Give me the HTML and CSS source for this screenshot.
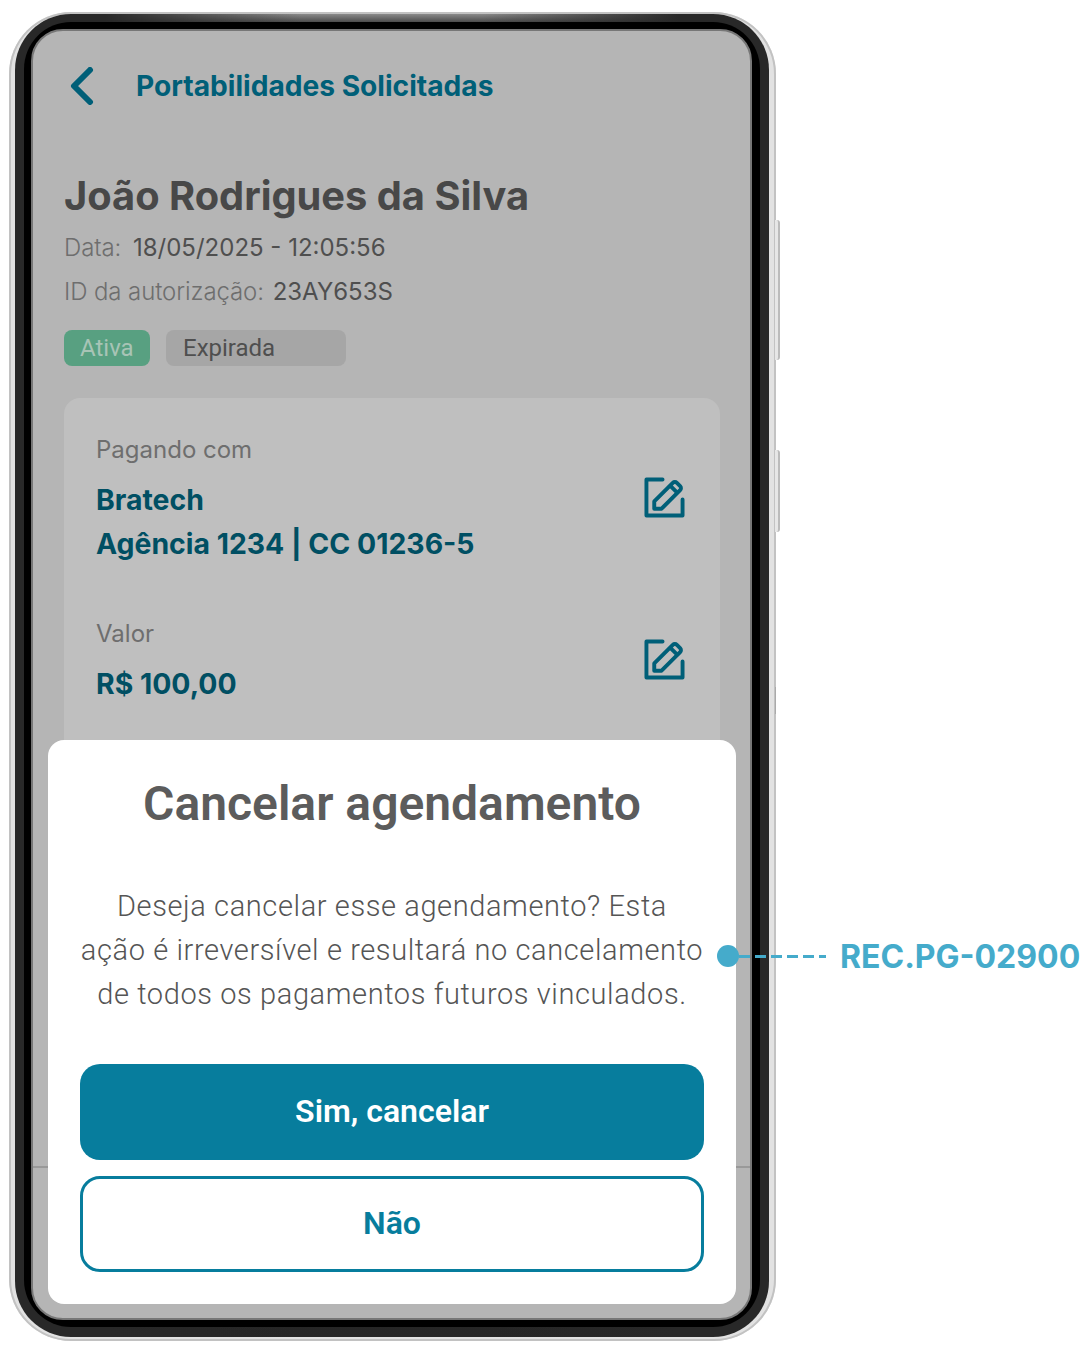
FILE: index.html
```html
<!DOCTYPE html>
<html lang="pt-BR">
<head>
    <meta charset="UTF-8">
    <meta name="viewport" content="width=device-width, initial-scale=1.0">
    <title>Portabilidades Solicitadas</title>
    <link rel="stylesheet" href="styles.css">
</head>
<body>
    <div class="stage">
        <div class="phone">
            <span class="side-key side-key-power"></span>
            <span class="side-key side-key-volume"></span>
            <span class="side-mark"></span>
            <div class="phone-bezel">
                <div class="phone-black">
                    <div class="screen">
                        <div class="screen-main">
                            <div class="app-header">
                                <svg class="back-icon" viewBox="0 0 24 38" aria-hidden="true">
                                    <path d="M20 3 4 19l16 16"/>
                                </svg>
                                <h1 class="app-title">Portabilidades Solicitadas</h1>
                            </div>

                            <h2 class="person-name">João Rodrigues da Silva</h2>
                            <p class="meta-line"><span class="meta-label">Data:</span> 18/05/2025 - 12:05:56</p>
                            <p class="meta-line"><span class="meta-label">ID da autorização:</span> 23AY653S</p>

                            <div class="chip-row">
                                <span class="chip chip-active">Ativa</span>
                                <span class="chip chip-expired">Expirada</span>
                            </div>

                            <div class="detail-card">
                                <div class="detail-row">
                                    <div class="detail-text">
                                        <p class="detail-label">Pagando com</p>
                                        <p class="detail-value">Bratech</p>
                                        <p class="detail-value">Agência 1234 | CC 01236-5</p>
                                    </div>
                                    <svg class="edit-icon" viewBox="0 0 42 42" aria-hidden="true">
                                        <path d="M19 2.500H2.500v37h37V23"/>
                                        <path d="M10.500 32.500v-7.500L29.500 6a3 3 0 0 1 4.200 0l3.300 3.300a3 3 0 0 1 0 4.200L18 32.500z"/>
                                        <path d="m27 9 6.500 6.500"/>
                                    </svg>
                                </div>
                                <div class="detail-row detail-row-amount">
                                    <div class="detail-text">
                                        <p class="detail-label">Valor</p>
                                        <p class="detail-value">R$ 100,00</p>
                                    </div>
                                    <svg class="edit-icon" viewBox="0 0 42 42" aria-hidden="true">
                                        <path d="M19 2.500H2.500v37h37V23"/>
                                        <path d="M10.500 32.500v-7.500L29.500 6a3 3 0 0 1 4.200 0l3.300 3.300a3 3 0 0 1 0 4.200L18 32.500z"/>
                                        <path d="m27 9 6.500 6.500"/>
                                    </svg>
                                </div>
                            </div>
                        </div>
                        <div class="screen-footer"></div>

                        <div class="modal">
                            <h2 class="modal-title">Cancelar agendamento</h2>
                            <p class="modal-text">Deseja cancelar esse agendamento? Esta<br>ação é irreversível e resultará no cancelamento<br>de todos os pagamentos futuros vinculados.</p>
                            <button class="btn btn-primary">Sim, cancelar</button>
                            <button class="btn btn-secondary">Não</button>
                        </div>
                    </div>
                </div>
            </div>
        </div>

        <div class="callout">
            <span class="callout-dot"></span>
            <span class="callout-line"></span>
            <span class="callout-code">REC.PG-02900</span>
        </div>
    </div>
</body>
</html>
```

FILE: styles.css
```css
* {
    margin: 0;
    padding: 0;
    box-sizing: border-box;
}

body {
    background: #fff;
    font-family: 'Roboto', sans-serif;
    overflow: hidden;
}

.stage {
    position: relative;
    width: 1082px;
    height: 1360px;
    padding: 12px 0 0 9px;
}

/* Phone frame */
.phone {
    position: relative;
    width: 767px;
    height: 1329px;
    padding: 2px 7px 4px 6px;
    border-radius: 62px;
    background: #e2e2e2;
    box-shadow: inset 0 0 0 2px #c2c2c2;
}

.side-key {
    position: absolute;
    left: 766px;
    width: 5px;
    background: #e6e6e6;
    border-radius: 0 3px 3px 0;
    border-right: 2px solid #bbb;
}

.side-key-power {
    top: 208px;
    height: 140px;
}

.side-key-volume {
    top: 438px;
    height: 82px;
}

.side-mark {
    position: absolute;
    left: 766px;
    top: 675px;
    width: 1px;
    height: 27px;
    background: #aaa;
}

.phone-bezel {
    height: 100%;
    padding: 8px 9px 10px 9px;
    border-radius: 56px;
    background:
        linear-gradient(90deg, #282828 12%, rgba(40, 40, 40, 0) 38%, rgba(40, 40, 40, 0) 62%, #282828 88%),
        linear-gradient(180deg, #8a8a8a 0, #3c3c3c 10px, #383838 50%, #262626 100%);
}

.phone-black {
    height: 100%;
    padding: 7px 8px 7px 7px;
    border-radius: 47px;
    background: #000;
}

.screen {
    position: relative;
    display: flex;
    flex-direction: column;
    height: 100%;
    overflow: hidden;
    border: 2px solid #777;
    border-radius: 32px;
    background: #b5b5b5;
}

.screen-main {
    flex: 1;
    overflow: hidden;
    padding: 0 30px 0 31px;
}

.screen-footer {
    height: 152px;
    border-top: 2px solid #999;
}

/* Header */
.app-header {
    display: flex;
    align-items: center;
    height: 110px;
}

.back-icon {
    width: 24px;
    height: 38px;
    margin-left: 6px;
    fill: none;
    stroke: #005f78;
    stroke-width: 6;
    stroke-linecap: round;
    stroke-linejoin: round;
}

.app-title {
    margin-left: 42px;
    color: #005f78;
    font-family: 'Inter', sans-serif;
    font-size: 28.15px;
    font-weight: 700;
    white-space: nowrap;
}

.person-name {
    margin-top: 31px;
    color: #484848;
    font-family: 'Inter', sans-serif;
    font-size: 39.8px;
    font-weight: 700;
    line-height: 48px;
}

.meta-line {
    height: 44px;
    color: #4f4f4f;
    font-family: 'Inter', sans-serif;
    font-size: 24px;
    font-weight: 400;
    line-height: 44px;
}

.person-name + .meta-line {
    margin-top: 6px;
}

.meta-label {
    margin-right: 2px;
    color: #6e6e6e;
    font-weight: 300;
    letter-spacing: -0.1px;
}

.person-name + .meta-line .meta-label {
    margin-right: 5px;
}

.chip-row {
    display: flex;
    gap: 16px;
    margin-top: 16px;
}

.chip {
    height: 36px;
    border-radius: 8px;
    font-size: 24px;
    line-height: 36px;
}

.chip-active {
    width: 86px;
    padding-left: 16px;
    background: #58a081;
    color: #a8c4b6;
}

.chip-expired {
    width: 180px;
    padding-left: 17px;
    background: #a6a6a6;
    color: #4f4f4f;
}

/* Detail card */
.detail-card {
    height: 760px;
    margin-top: 32px;
    padding: 32px 32px 0;
    border-radius: 16px;
    background: #bfbfbf;
}

.detail-row {
    display: flex;
    justify-content: space-between;
    align-items: center;
}

.detail-row-amount {
    margin-top: 48px;
}

.detail-label {
    height: 40px;
    margin-bottom: 8px;
    color: #6e6e6e;
    font-family: 'Inter', sans-serif;
    font-size: 24px;
    line-height: 40px;
}

.detail-value {
    height: 44px;
    color: #004f63;
    font-family: 'Inter', sans-serif;
    font-size: 28.4px;
    font-weight: 700;
    line-height: 44px;
}

.edit-icon {
    flex: none;
    width: 41px;
    height: 41px;
    margin-right: 3px;
    margin-bottom: 2px;
    fill: none;
    stroke: #005f78;
    stroke-width: 4;
    stroke-linecap: round;
    stroke-linejoin: round;
}

/* Modal */
.modal {
    position: absolute;
    left: 15px;
    right: 14px;
    bottom: 14px;
    height: 564px;
    padding: 32px;
    border-radius: 16px;
    background: #fff;
}

.modal-title {
    color: #5c5c5c;
    font-size: 48px;
    font-weight: 600;
    line-height: 64px;
    text-align: center;
    white-space: nowrap;
}

.modal-text {
    margin-top: 48px;
    color: #555;
    font-size: 29px;
    font-weight: 300;
    line-height: 44px;
    text-align: center;
    letter-spacing: 0.6px;
    white-space: nowrap;
}

.btn {
    display: block;
    width: 100%;
    height: 96px;
    padding-bottom: 2px;
    border-radius: 20px;
    font-family: 'Roboto', sans-serif;
    font-size: 32px;
    font-weight: 600;
    cursor: pointer;
}

.btn-primary {
    margin-top: 48px;
    border: none;
    background: #077d9d;
    color: #fff;
}

.btn-secondary {
    margin-top: 16px;
    border: 3px solid #077d9d;
    background: #fff;
    color: #077d9d;
}

/* Callout */
.callout {
    position: absolute;
    left: 717px;
    top: 936px;
    display: flex;
    align-items: center;
    height: 40px;
}

.callout-dot {
    width: 22px;
    height: 22px;
    border-radius: 50%;
    background: #45abcb;
}

.callout-line {
    width: 87px;
    height: 3px;
    background: repeating-linear-gradient(90deg, #45abcb 0 11px, transparent 11px 16px);
}

.callout-code {
    margin-left: 14px;
    color: #45abcb;
    font-family: 'Inter', sans-serif;
    font-size: 32px;
    font-weight: 700;
    white-space: nowrap;
}
```
